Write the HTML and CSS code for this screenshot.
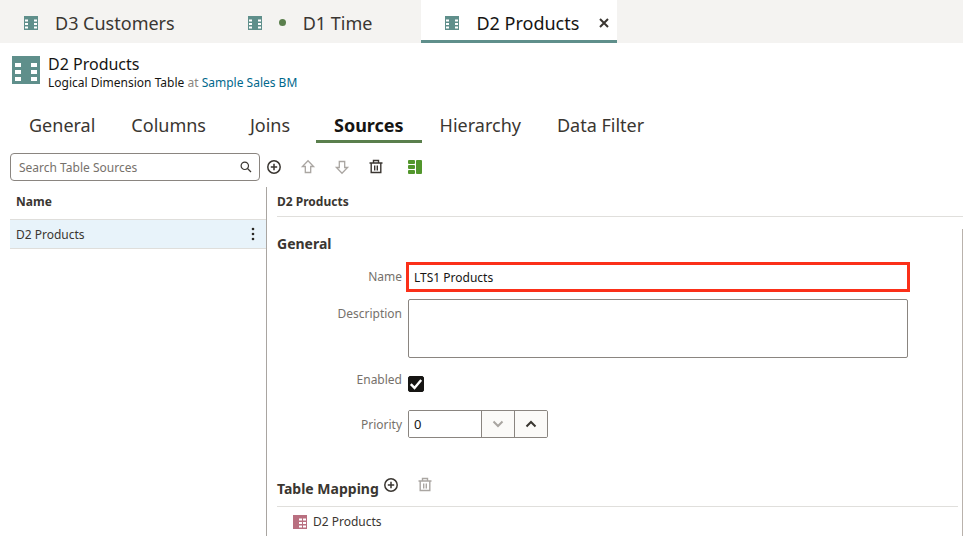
FILE: index.html
```html
<!DOCTYPE html>
<html lang="en">
<head>
<meta charset="utf-8">
<title>D2 Products</title>
<link rel="stylesheet" href="styles.css">
</head>
<body>
<svg class="sprite" aria-hidden="true">
  <symbol id="dimension" viewBox="0 0 28 28">
    <path fill="#5f8f8b" d="M0 0h28v28H0z"/>
    <path fill="#fff" d="M3 7h6v4H3zM3 14h6v4H3zM3 21h6v4H3zM19 7h6v4h-6zM19 14h6v4h-6zM19 21h6v4h-6z"/>
  </symbol>
  <symbol id="dimension-small" viewBox="0 0 14 14">
    <path fill="#5f8f8b" d="M0 0h14v14H0z"/>
    <path fill="#fff" d="M1 3.500h3v2H1zM1 7h3v2H1zM1 10.500h3v2H1zM10 3.500h3v2h-3zM10 7h3v2h-3zM10 10.500h3v2h-3z"/>
  </symbol>
  <symbol id="add" viewBox="0 0 16 16">
    <g fill="none" stroke="currentColor" stroke-width="1.500"><circle cx="8" cy="8" r="6.200"/><path d="M8 4.800v6.400M4.800 8h6.400"/></g>
  </symbol>
  <symbol id="arrow-up" viewBox="0 0 16 16">
    <path fill="none" stroke="currentColor" stroke-width="1.300" d="M8 1.800 2.400 7.500h2.900v6h5.400v-6h2.900z"/>
  </symbol>
  <symbol id="trash" viewBox="0 0 16 16">
    <path fill="none" stroke="currentColor" stroke-width="1.400" d="M1.500 4h13M5.500 4V1.500h5V4M3.200 4v9.500h9.600V4M6.700 6.500v5M9.300 6.500v5"/>
  </symbol>
</svg>

<nav class="doc-tabs" aria-label="Open tables">
  <a class="doc-tab" href="#customers"><svg class="icon-14"><use href="#dimension-small"/></svg><span>D3 Customers</span><span class="close-space"></span></a>
  <a class="doc-tab" href="#time"><svg class="icon-14"><use href="#dimension-small"/></svg><span class="dot"></span><span>D1 Time</span><span class="close-space"></span></a>
  <div class="doc-tab active"><svg class="icon-14"><use href="#dimension-small"/></svg><a href="#products">D2 Products</a><button class="close-space" aria-label="Close"><svg viewBox="0 0 10 10"><path fill="none" stroke="#3a3631" stroke-width="2" d="m1 1 8 8M9 1 1 9"/></svg></button></div>
</nav>

<header class="title">
  <svg class="icon-28"><use href="#dimension"/></svg>
  <div>
    <h1>D2 Products</h1>
    <p>Logical Dimension Table <span>at</span> <a href="#model">Sample Sales BM</a></p>
  </div>
</header>

<nav class="sections" aria-label="Sections">
  <a href="#general">General</a>
  <a href="#columns">Columns</a>
  <a href="#joins">Joins</a>
  <a href="#sources" class="current">Sources</a>
  <a href="#hierarchy">Hierarchy</a>
  <a href="#filter">Data Filter</a>
</nav>

<div class="toolbar">
  <div class="search">
    <input type="search" placeholder="Search Table Sources" aria-label="Search Table Sources">
    <svg viewBox="0 0 12 12"><g fill="none" stroke="#3a3631" stroke-width="1.200"><circle cx="4.800" cy="4.800" r="3.700"/><path d="m7.500 7.500 3.500 3.500"/></g></svg>
  </div>
  <button class="tool" aria-label="Add"><svg><use href="#add"/></svg></button>
  <button class="tool" aria-label="Move up" disabled><svg><use href="#arrow-up"/></svg></button>
  <button class="tool" aria-label="Move down" disabled><svg class="flip"><use href="#arrow-up"/></svg></button>
  <button class="tool" aria-label="Delete"><svg><use href="#trash"/></svg></button>
  <button class="tool layout" aria-label="Detail view"><svg viewBox="0 0 14 14"><g fill="#52962c"><rect width="7" height="4" rx="1"/><rect y="5" width="7" height="4" rx="1"/><rect y="10" width="7" height="4" rx="1"/><rect x="8" width="6" height="14" rx="1"/></g></svg></button>
</div>

<main class="panes">
  <section class="list">
    <h2>Name</h2>
    <div class="list-row"><span>D2 Products</span><button aria-label="Row menu"><svg viewBox="0 0 4 14"><g fill="#2b2825"><circle cx="2" cy="2" r="1.300"/><circle cx="2" cy="7" r="1.300"/><circle cx="2" cy="12" r="1.300"/></g></svg></button></div>
  </section>
  <section class="detail">
    <h2>D2 Products</h2>
    <div class="scroll">
      <h3>General</h3>
      <form>
        <div class="field"><label for="name">Name</label><input id="name" class="name" type="text" value="LTS1 Products"></div>
        <div class="field"><label for="description">Description</label><textarea id="description"></textarea></div>
        <div class="field field-check"><label for="enabled">Enabled</label>
          <div class="check"><input id="enabled" type="checkbox" checked><svg viewBox="0 0 16 16"><path fill="none" stroke="#fff" stroke-width="2.400" d="m2.800 8.200 3.700 3.700 6.700-8"/></svg></div>
        </div>
        <div class="field"><label for="priority">Priority</label>
          <div class="stepper"><input id="priority" type="text" inputmode="numeric" value="0"><button type="button" aria-label="Decrease" disabled><svg viewBox="0 0 12 8"><path d="m1.500 1.500 4.500 4.500 4.500-4.500"/></svg></button><button type="button" aria-label="Increase"><svg viewBox="0 0 12 8"><path d="m1.500 6.500 4.500-4.500 4.500 4.500"/></svg></button></div>
        </div>
      </form>
      <div class="mapping">
        <h3>Table Mapping</h3>
        <button class="tool" aria-label="Add table"><svg><use href="#add"/></svg></button>
        <button class="tool" aria-label="Delete table" disabled><svg><use href="#trash"/></svg></button>
      </div>
      <div class="mapped"><svg class="icon-14" viewBox="0 0 14 14"><path fill="#b96f80" d="M0 0h14v14H0z"/><path fill="#fff" d="M6 3.500h3v2H6zM10 3.500h3v2h-3zM6 7h3v2H6zM10 7h3v2h-3zM6 10.500h3v2H6zM10 10.500h3v2h-3z"/></svg><span>D2 Products</span></div>
    </div>
  </section>
</main>
</body>
</html>
```
FILE: styles.css
```css
* { box-sizing: border-box; }
html { height: 100%; }
body {
  margin: 0;
  min-height: 100%;
  display: flex;
  flex-direction: column;
  background: #fff;
  color: #3a3631;
  font: 12px/20px "Noto Sans", "Open Sans", sans-serif;
}
h1, h2, h3, p { margin: 0; }
a { color: inherit; text-decoration: none; }
button, input, textarea { font: inherit; color: inherit; margin: 0; }
button { display: flex; align-items: center; justify-content: center; padding: 0; border: 0; background: none; }
svg { display: block; flex: none; }
.sprite { position: absolute; width: 0; height: 0; }
.icon-14 { width: 14px; height: 14px; }
.icon-28 { width: 28px; height: 28px; }

.doc-tabs { display: flex; gap: 11px; height: 43px; background: #f4f3f1; font-size: 18px; }
.doc-tab { display: flex; align-items: center; gap: 17px; padding: 5px 5px 0 24px; border-bottom: 3px solid transparent; white-space: nowrap; }
.doc-tab.active { background: #fff; border-bottom-color: #5f8f8b; color: #161513; }
.close-space { width: 16px; height: 18px; }
.close-space svg { width: 10px; height: 10px; }
.dot { width: 7px; height: 7px; border-radius: 50%; background: #5a7f4d; }

.title { display: flex; gap: 8px; padding: 13px 12px 0; color: #161513; }
.title h1 { margin-top: -1px; font-size: 16px; font-weight: 400; line-height: 18px; }
.title p { margin-top: 1px; line-height: 18px; }
.title p span { color: #8a8580; }
.title a { color: #00688c; }

.sections { display: flex; margin: 16px 0 0 11px; font-size: 18px; }
.sections a { min-width: 92px; padding: 0 18px; height: 35px; line-height: 35px; text-align: center; border-bottom: 3px solid transparent; }
.sections .current { font-weight: 700; color: #161513; border-bottom-color: #5a7f4d; }

.toolbar { display: flex; align-items: center; gap: 6px; margin: 10px 0 6px 10px; }
.search { display: flex; align-items: center; width: 250px; height: 28px; margin-right: -6px; padding: 0 7px 0 8px; border: 1px solid #8a8580; border-radius: 4px; }
.search input { flex: 1; min-width: 0; padding: 2px 0 0; border: 0; outline: 0; background: none; }
.search input::placeholder { color: #76716b; opacity: 1; }
.search svg { width: 12px; height: 12px; }
.tool { width: 28px; height: 28px; }
.tool svg { width: 16px; height: 16px; }
.tool:disabled { color: #aaa6a2; }
.tool .flip { transform: rotate(180deg); }
.layout { margin-left: 5px; }
.layout svg { width: 14px; height: 14px; }

.panes { display: flex; flex: 1; }
.list { width: 257px; margin-left: 10px; border-right: 1px solid #a9a5a1; }
.list h2, .detail h2 { font-size: 12px; line-height: 29px; }
.list h2 { padding-left: 6px; height: 32px; }
.list-row { display: flex; align-items: center; justify-content: space-between; height: 30px; padding: 0 3px 0 6px; background: #e8f3fa; border: solid #dfdedb; border-width: 1px 0; line-height: 30px; }
.list-row button { width: 20px; height: 20px; }
.list-row svg { width: 4px; height: 14px; }
.list-row span { padding-top: 2px; }

.detail { flex: 1; min-width: 0; display: flex; flex-direction: column; padding-left: 10px; }
.detail h2 { height: 30px; border-bottom: 1px solid #e0dfdc; }
.scroll { flex: 1; margin-top: 12px; padding: 5px 4px 0 0; border-right: 1px solid #b9b2ac; }
h3 { font-size: 14px; line-height: 20px; }
form { display: flex; flex-direction: column; gap: 7px; margin-top: 8px; }
.field { display: grid; grid-template-columns: 125px minmax(0, 500px); column-gap: 6px; align-items: start; }
.field label { line-height: 30px; text-align: right; color: #76716b; }
.field textarea { display: block; width: 100%; height: 59px; padding: 4px 5px; border: 1px solid #8a8580; border-radius: 2px; resize: none; }
.name { height: 30px; margin: 0 -2px; padding: 0 5px; border: 3px solid #fb3019; color: #161513; outline: 0; }
.field-check { min-height: 38px; }
.check { display: grid; width: 16px; height: 16px; margin-top: 11px; }
.check > * { grid-area: 1 / 1; width: 16px; height: 16px; }
.check input { appearance: none; border: 1px solid #161513; border-radius: 2px; }
.check input:checked { background: #161513; }
.check svg { visibility: hidden; pointer-events: none; }
.check input:checked + svg { visibility: visible; z-index: 1; }
.stepper { display: flex; width: 140px; height: 28px; border: 1px solid #8a8580; border-radius: 2px; overflow: hidden; }
.stepper input { flex: 1; min-width: 0; padding: 0 5px; border: 0; font-size: 13px; color: #161513; }
.stepper button { width: 33px; border-left: 1px solid #8a8580; background: #fbfaf8; }
.stepper svg { width: 12px; height: 8px; fill: none; stroke: #3a3631; stroke-width: 2; }
.stepper button:disabled svg { stroke: #a9a5a1; }

.mapping { display: flex; align-items: flex-start; gap: 6px; margin-top: 31px; height: 36px; border-bottom: 1px solid #e0dfdc; }
.mapping h3 { margin: 8px -8px 0 0; }
.mapped { display: flex; align-items: center; gap: 6px; height: 30px; padding-left: 16px; }
```
